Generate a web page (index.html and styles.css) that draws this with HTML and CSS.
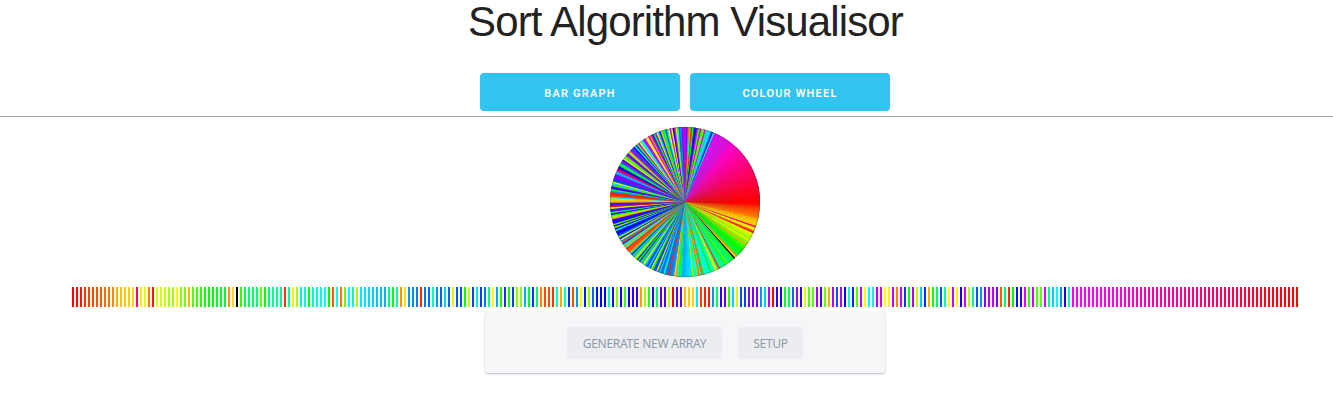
FILE: index.html
```
<!DOCTYPE html>
<html lang="en">
<head>
<meta charset="utf-8">
<title>Sort Algorithm Visualisor</title>
<link rel="stylesheet" href="styles.css">
</head>
<body>
<div class="page">
  <h1 class="title">Sort Algorithm Visualisor</h1>
  <nav class="modes">
    <button class="mode">BAR GRAPH</button>
    <button class="mode">COLOUR WHEEL</button>
  </nav>
  <div class="rule"></div>
  <canvas class="wheel" id="wheel" width="150" height="150"></canvas>
  <div class="strip" id="strip"></div>
  <div class="panel">
    <button class="action generate">GENERATE NEW ARRAY</button>
    <button class="action setup">SETUP</button>
  </div>
</div>
<script src="main.js"></script>
</body>
</html>
```
FILE: styles.css
```
* { box-sizing: border-box; }
body { margin: 0; background: #fff; overflow: hidden; font-family: "Liberation Sans", Arial, sans-serif; }
.page { display: flex; flex-direction: column; align-items: center; width: 1333px; height: 417px; }
.title { margin: -4px 0 0 38px; height: 77px; font-size: 42px; line-height: 52px; font-weight: 400; letter-spacing: -.88px; color: #222; white-space: nowrap; }
.modes { display: flex; gap: 10px; margin-left: 37px; }
.mode { width: 200px; height: 38px; padding: 2px 0 0; border: 0; border-radius: 4px; background: #33c3f0; color: #fff; font: 600 11px/38px Roboto, Arial, sans-serif; letter-spacing: 1.2px; }
.rule { width: 100%; height: 1px; margin-top: 5px; background: #a9a9a9; }
.wheel { display: block; margin: 10px 0 0 37px; }
.strip { display: flex; gap: 2px; width: 1226px; height: 20px; margin: 10px 0 0 37px; }
.bar { flex: 0 0 2px; height: 20px; }
.panel { display: flex; justify-content: center; gap: 16px; width: 400px; height: 61px; margin: 5px 0 0 37px; padding-top: 15px; border-radius: 3px; background: #f5f6f8; box-shadow: 0 1px 2px rgba(90, 105, 120, .45); }
.action { height: 32px; padding: 2px 0 0; border: 0; border-radius: 3px; background: #ecedf0; color: #8b9ba8; font: 400 12px/30px "Noto Sans", sans-serif; letter-spacing: -.27px; white-space: nowrap; }
.generate { width: 155px; }
.setup { width: 65px; }
```
FILE: main.js
```
// Hue of every array element; null is the element under inspection.
const hues = [
  0,2,5,12,15,18,20,22,25,28,32,42,45,47,48,50,335,55,65,28,5,68,70,75,80,82,58,88,92,42,
  100,105,110,115,120,125,128,130,133,35,52,null,110,140,143,145,148,95,118,152,
  153,154,155,12,158,65,80,165,172,125,165,170,172,175,118,22,180,28,95,182,165,82,186,187,189,191,194,196,198,150,
  122,165,36,52,205,207,210,10,212,214,165,205,217,190,217,55,220,222,120,72,224,
  185,225,212,150,62,200,110,228,115,225,85,85,198,130,228,148,32,18,18,12,170,40,165,228,18,205,62,233,83,215,
  235,240,240,165,235,88,243,105,246,250,252,38,82,110,250,145,258,260,75,0,262,
  260,43,48,50,185,15,8,8,205,140,250,265,110,190,70,222,225,270,270,270,205,192,285,0,250,245,130,140,215,280,
  250,68,100,100,280,255,95,42,282,220,282,240,170,230,98,285,62,172,182,285,288,
  62,58,288,32,288,228,130,280,75,192,230,42,115,142,220,160,60,288,65,245,290,78,155,220,205,270,285,285,270,22,
  150,10,120,235,250,292,105,290,100,98,293,155,192,182,205,245,168
];
const total = 307;
const sorted = total - hues.length;
for (let i = 0; i < sorted; i++) hues.push(297 + 63 * i / (sorted - 1));

const colours = hues.map(h => h === null ? '#000' : `hsl(${h}, 100%, 50%)`);

const strip = document.getElementById('strip');
colours.forEach(c => {
  const bar = document.createElement('div');
  bar.className = 'bar';
  bar.style.background = c;
  strip.appendChild(bar);
});

const ctx = document.getElementById('wheel').getContext('2d');
const step = 2 * Math.PI / total;
ctx.beginPath();
ctx.arc(75, 75, 75, 0, 2 * Math.PI);
ctx.fillStyle = '#555';
ctx.fill();
colours.forEach((c, i) => {
  ctx.beginPath();
  ctx.moveTo(75, 75);
  ctx.arc(75, 75, 75, i * step, Math.min(i + 1.3, total) * step);
  ctx.closePath();
  ctx.fillStyle = c;
  ctx.fill();
});

// Muted violet band ahead of the sorted magentas.
ctx.beginPath();
ctx.moveTo(75, 75);
ctx.arc(75, 75, 75, 293.5 * Math.PI / 180, 307 * Math.PI / 180);
ctx.closePath();
ctx.fillStyle = 'rgba(130, 50, 200, .3)';
ctx.fill();

// Thin rim.
ctx.beginPath();
ctx.arc(75, 75, 74.6, 0, 2 * Math.PI);
ctx.strokeStyle = 'rgba(50, 50, 50, .3)';
ctx.lineWidth = .8;
ctx.stroke();
```
